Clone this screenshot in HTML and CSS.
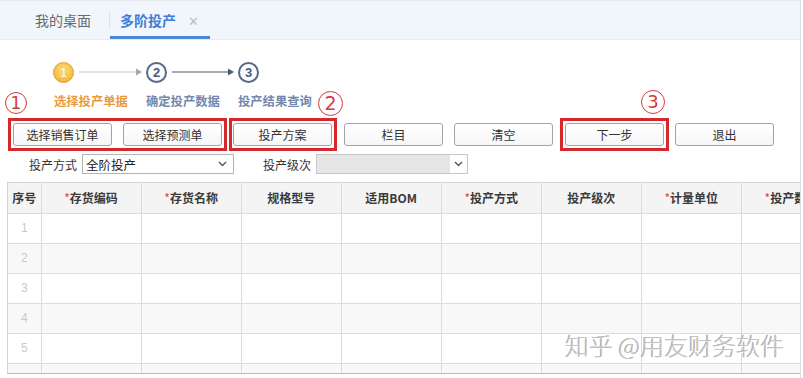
FILE: index.html
```html
<!DOCTYPE html>
<html lang="zh">
<head>
<meta charset="utf-8">
<title>多阶投产</title>
<link rel="stylesheet" href="styles.css">
</head>
<body>
<div class="page">
  <div class="tabbar">
    <div class="tab">我的桌面</div>
    <div class="tab-sep"></div>
    <div class="tab active">多阶投产<span class="tab-close">✕</span></div>
  </div>

  <div class="steps">
    <span class="step-dot done">1</span>
    <svg class="connector" width="72" height="10" viewBox="0 0 72 10"><line x1="5" y1="5" x2="64" y2="5" stroke="#c4c4c4" stroke-width="1.2"/><polygon points="62,1.5 68,5 62,8.5" fill="#a8a8a8"/></svg>
    <span class="step-dot">2</span>
    <svg class="connector" width="71" height="10" viewBox="0 0 71 10"><line x1="5" y1="5" x2="63" y2="5" stroke="#4f5a6c" stroke-width="1.2"/><polygon points="61,1.5 67,5 61,8.5" fill="#4f5a6c"/></svg>
    <span class="step-dot">3</span>
  </div>

  <div class="step-labels">
    <span class="step-label current">选择投产单据</span>
    <span class="step-label">确定投产数据</span>
    <span class="step-label">投产结果查询</span>
  </div>

  <div class="toolbar">
    <div class="mark-box first">
      <button class="btn">选择销售订单</button>
      <button class="btn gap">选择预测单</button>
    </div>
    <div class="mark-box second">
      <button class="btn">投产方案</button>
    </div>
    <button class="btn plain m7">栏目</button>
    <button class="btn plain m11">清空</button>
    <div class="mark-box third">
      <button class="btn">下一步</button>
    </div>
    <button class="btn plain m6">退出</button>
  </div>

  <div class="form-row">
    <span class="form-label first">投产方式</span>
    <div class="select">
      <span class="select-text">全阶投产</span>
      <svg class="chev" width="9" height="6" viewBox="0 0 9 6"><polyline points="1,1 4.5,4.5 8,1" fill="none" stroke="#555" stroke-width="1.4"/></svg>
    </div>
    <span class="form-label second">投产级次</span>
    <div class="select disabled">
      <span class="select-fill"></span>
      <span class="select-btn"><svg width="9" height="6" viewBox="0 0 9 6"><polyline points="1,1 4.5,4.5 8,1" fill="none" stroke="#555" stroke-width="1.4"/></svg></span>
    </div>
  </div>

  <div class="grid">
    <table>
      <colgroup>
        <col class="c-no"><col class="c"><col class="c"><col class="c"><col class="c"><col class="c"><col class="c"><col class="c"><col class="c">
      </colgroup>
      <thead>
        <tr>
          <th>序号</th>
          <th><span class="req">*</span>存货编码</th>
          <th><span class="req">*</span>存货名称</th>
          <th>规格型号</th>
          <th>适用BOM</th>
          <th><span class="req">*</span>投产方式</th>
          <th>投产级次</th>
          <th><span class="req">*</span>计量单位</th>
          <th><span class="req">*</span>投产数量</th>
        </tr>
      </thead>
      <tbody>
        <tr><td class="no">1</td><td></td><td></td><td></td><td></td><td></td><td></td><td></td><td></td></tr>
        <tr class="alt"><td class="no">2</td><td></td><td></td><td></td><td></td><td></td><td></td><td></td><td></td></tr>
        <tr><td class="no">3</td><td></td><td></td><td></td><td></td><td></td><td></td><td></td><td></td></tr>
        <tr class="alt"><td class="no">4</td><td></td><td></td><td></td><td></td><td></td><td></td><td></td><td></td></tr>
        <tr><td class="no">5</td><td></td><td></td><td></td><td></td><td></td><td></td><td></td><td></td></tr>
        <tr class="alt"><td class="no">6</td><td></td><td></td><td></td><td></td><td></td><td></td><td></td><td></td></tr>
      </tbody>
    </table>
  </div>

  <span class="anno a1">1</span>
  <span class="anno a2">2</span>
  <span class="anno a3">3</span>

  <div class="watermark">知乎 @用友财务软件</div>
</div>
</body>
</html>
```

FILE: styles.css
```css
* { box-sizing: border-box; }

html, body {
  margin: 0;
  padding: 0;
  background: #ffffff;
}

body {
  font-family: "Noto Sans CJK SC", "Microsoft YaHei", sans-serif;
  font-size: 12px;
  color: #333;
  width: 803px;
  height: 378px;
  overflow: hidden;
}

.page {
  position: relative;
  width: 801px;
  height: 378px;
  border-right: 1px solid #dcdfe4;
  background: #fff;
}

/* tabs */
.tabbar {
  height: 40px;
  display: flex;
  align-items: center;
  background: #f1f5fc;
  border-top: 1px solid #e7eaef;
  border-bottom: 1px solid #e8ecf2;
}

.tab {
  height: 100%;
  display: flex;
  align-items: center;
  font-size: 14px;
  color: #6a6a6a;
  line-height: 1;
}

.tab:first-child {
  margin-left: 17px;
  padding: 0 18px;
}

.tab-sep {
  width: 1px;
  height: 18px;
  background: #dde1e8;
}

.tab.active {
  width: 100px;
  padding: 3px 0 0 10px;
  color: #3f7fd8;
  font-weight: bold;
  border-bottom: 3px solid #4c86d9;
}

.tab-close {
  margin-left: 12px;
  font-size: 13px;
  font-weight: normal;
  color: #bcbcbc;
}

/* steps */
.steps {
  display: flex;
  align-items: center;
  margin-top: 21px;
  padding-left: 53px;
  height: 22px;
}

.step-dot {
  width: 21px;
  height: 21px;
  border-radius: 50%;
  border: 2px solid #5a6a86;
  background: #fbfcfe;
  color: #4b5a77;
  font-family: "Liberation Sans", sans-serif;
  font-size: 13px;
  font-weight: bold;
  display: flex;
  align-items: center;
  justify-content: center;
  line-height: 1;
}

.step-dot.done {
  border: 1.5px solid #e49d2a;
  background: radial-gradient(circle at 50% 40%, #ffe08a 0%, #f7c445 55%, #eea52a 100%);
  color: #fff7e2;
  text-shadow: 0 0 1px #d98a10;
}

.connector { display: block; }

.step-labels {
  display: flex;
  margin-top: 10px;
  padding-left: 54px;
  height: 16px;
  line-height: 16px;
}

.step-label {
  width: 92px;
  font-size: 12.3px;
  font-weight: bold;
  color: #7288ad;
  white-space: nowrap;
}

.step-label.current { color: #e99a3b; }

/* toolbar */
.toolbar {
  display: flex;
  align-items: center;
  margin-top: 9px;
  height: 33px;
}

.mark-box {
  display: flex;
  align-items: center;
  border: 3px solid #d5282c;
  padding: 2px;
  height: 33px;
}

.mark-box.first { margin-left: 8px; }
.mark-box.second { margin-left: 2px; padding-left: 1px; }
.mark-box.third { margin-left: 7px; }

.btn {
  width: 99px;
  height: 23px;
  padding: 0;
  border: 1px solid #a3a3a3;
  border-radius: 3px;
  background: linear-gradient(#ffffff, #f6f6f6);
  font-family: "Noto Sans CJK SC", "Microsoft YaHei", sans-serif;
  font-size: 12px;
  color: #333;
  line-height: 21px;
}

.btn.gap { margin-left: 11px; }
.btn.m7 { margin-left: 7px; }
.btn.m11 { margin-left: 11px; }
.btn.m6 { margin-left: 6px; }

/* form row */
.form-row {
  display: flex;
  align-items: center;
  margin-top: 3px;
  height: 20px;
}

.form-label {
  width: 48px;
  margin-right: 5px;
  font-size: 12px;
  color: #333;
  white-space: nowrap;
}

.form-label.first { margin-left: 29px; }
.form-label.second { margin-left: 29px; }

.select {
  width: 152px;
  height: 20px;
  border: 1px solid #b4b4b4;
  background: #fff;
  display: flex;
  align-items: center;
  justify-content: space-between;
  padding: 0 6px 0 3px;
}

.select-text {
  font-size: 12.5px;
  color: #222;
}

.chev { display: block; }

.select.disabled {
  padding: 0;
  border-color: #c6c6c6;
}

.select-fill {
  flex: 1;
  height: 100%;
  background: #e6e6e6;
}

.select-btn {
  width: 17px;
  height: 100%;
  background: #fff;
  display: flex;
  align-items: center;
  justify-content: center;
}

/* grid */
.grid {
  margin-top: 8px;
  margin-left: 7px;
  width: 793px;
  height: 192px;
  overflow: hidden;
  border-bottom: 1px solid #b9b9b9;
  border-left: 1px solid #d4d4d4;
  border-top: 1px solid #d4d4d4;
}

table {
  border-collapse: collapse;
  table-layout: fixed;
  width: 834px;
}

col.c-no { width: 33px; }
col.c { width: 100px; }

th, td {
  border: 1px solid #dcdcdc;
  height: 30px;
  padding: 0;
  text-align: center;
  white-space: nowrap;
  overflow: hidden;
}

th {
  border-top: none;
  background: #f4f4f4;
  font-weight: bold;
  font-size: 12px;
  color: #3a3a3a;
}

th:first-child, td:first-child { border-left: none; }

.req {
  color: #d6453f;
  font-weight: normal;
}

tr.alt td { background: #f8f8f8; }

td.no {
  color: #c9c9c9;
  font-size: 12px;
  font-family: "Liberation Sans", sans-serif;
}

/* annotations */
.anno {
  position: absolute;
  border: 1px solid #d6393a;
  border-radius: 50%;
  color: #d6393a;
  font-family: "DejaVu Sans", sans-serif;
  font-weight: normal;
  display: flex;
  align-items: center;
  justify-content: center;
  line-height: 1;
}

.a1 { left: 5px; top: 92px; width: 22px; height: 22px; font-size: 17px; }
.a2 { left: 318px; top: 91px; width: 25px; height: 25px; font-size: 19px; }
.a3 { left: 641px; top: 90px; width: 24px; height: 24px; font-size: 18px; }

.watermark {
  position: absolute;
  left: 565px;
  top: 330px;
  font-size: 24px;
  font-weight: 300;
  line-height: 30px;
  color: #c2c2c2;
  white-space: nowrap;
  text-shadow: 1px 1px 0 #fff, -0.5px -0.5px 0 #9a9a9a;
}
```
